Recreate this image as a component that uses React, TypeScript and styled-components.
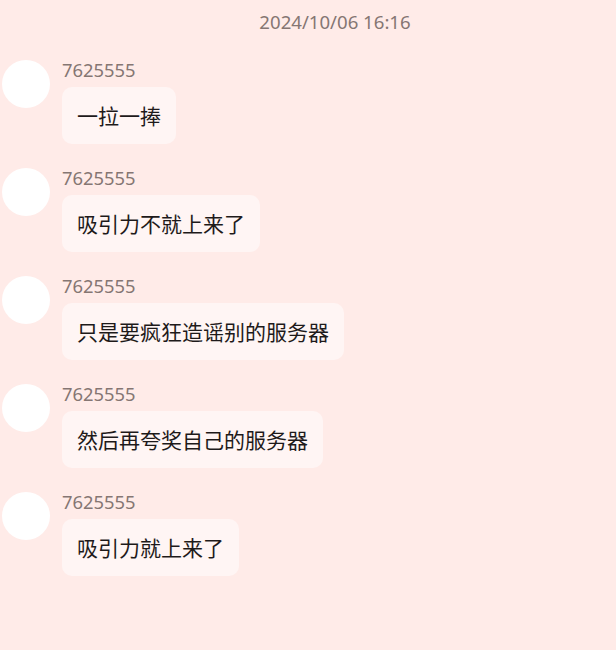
import styled, { createGlobalStyle } from "styled-components";

const GlobalStyle = createGlobalStyle`
  html, body {
    margin: 0;
    padding: 0;
    background: #ffebe8;
  }
  body {
    font-family: "Noto Sans", "Noto Sans CJK SC", sans-serif;
  }
`;

const Page = styled.div`
  width: 616px;
  min-height: 650px;
  background: #ffebe8;
  box-sizing: border-box;
  padding: 9px 0 0 2px;
`;

const Time = styled.div`
  text-align: center;
  padding-left: 52px;
  font-size: 18.6px;
  line-height: 26px;
  color: #857673;
  margin-bottom: 25px;
`;

const List = styled.div`
  display: flex;
  flex-direction: column;
  gap: 24px;
`;

const Row = styled.div`
  display: flex;
  align-items: flex-start;
  gap: 12px;
`;

const Avatar = styled.div`
  width: 48px;
  height: 48px;
  border-radius: 50%;
  background: #ffffff;
  flex-shrink: 0;
`;

const Body = styled.div`
  display: flex;
  flex-direction: column;
  align-items: flex-start;
  gap: 7px;
`;

const Name = styled.div`
  font-size: 18.4px;
  line-height: 20px;
  color: #857673;
`;

const Bubble = styled.div`
  background: #fff5f4;
  border-radius: 10px;
  padding: 15px;
  font-family: "Noto Sans CJK SC", sans-serif;
  font-size: 21px;
  line-height: 27px;
  color: #1e1a1a;
`;

const messages = [
  "一拉一捧",
  "吸引力不就上来了",
  "只是要疯狂造谣别的服务器",
  "然后再夸奖自己的服务器",
  "吸引力就上来了",
];

export default function App() {
  return (
    <Page>
      <GlobalStyle />
      <Time>2024/10/06 16:16</Time>
      <List>
        {messages.map((m, i) => (
          <Row key={i}>
            <Avatar />
            <Body>
              <Name>7625555</Name>
              <Bubble>{m}</Bubble>
            </Body>
          </Row>
        ))}
      </List>
    </Page>
  );
}
